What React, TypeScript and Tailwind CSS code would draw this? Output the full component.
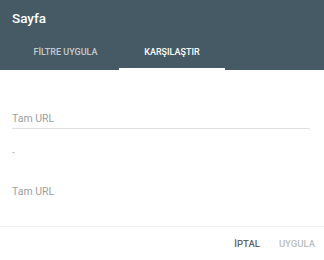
export default function App() {
  return (
    <div
      className="flex h-[260px] w-[324px] flex-col bg-white"
      style={{ fontFamily: "Roboto, 'Liberation Sans', sans-serif" }}
    >
      <header className="bg-[#455a64]">
        <div className="flex h-[36px] items-center px-3 text-[13.5px] font-medium text-white">
          Sayfa
        </div>
        <div className="flex h-[34px] px-3">
          <button className="flex w-[107px] items-center justify-center text-[9px] font-medium uppercase text-white/70">
            FİLTRE UYGULA
          </button>
          <button className="flex w-[106px] items-center justify-center border-b-2 border-white pt-[2px] text-[9px] font-medium uppercase text-white">
            KARŞILAŞTIR
          </button>
        </div>
      </header>

      <main className="flex-1 px-3 pt-[38px]">
        <div className="mr-[2px] flex h-[21px] items-center pt-[1px] border-b border-[#e0e0e0] text-[10.5px] text-[#9e9e9e]">
          Tam URL
        </div>
        <div className="mt-[13px] flex h-[20px] items-center text-[10px] text-[#bdbdbd]">
          -
        </div>
        <div className="mt-[19px] flex h-[20px] items-center pt-[1px] text-[10.5px] text-[#9e9e9e]">
          Tam URL
        </div>
      </main>

      <footer className="flex h-[34px] items-center justify-end gap-[19px] border-t border-[#eeeeee] px-[9px] pt-[1px]">
        <button className="text-[9.5px] font-medium uppercase text-[#616161]">İPTAL</button>
        <button className="text-[9.5px] font-medium uppercase text-[#bdbdbd]">UYGULA</button>
      </footer>
    </div>
  );
}
